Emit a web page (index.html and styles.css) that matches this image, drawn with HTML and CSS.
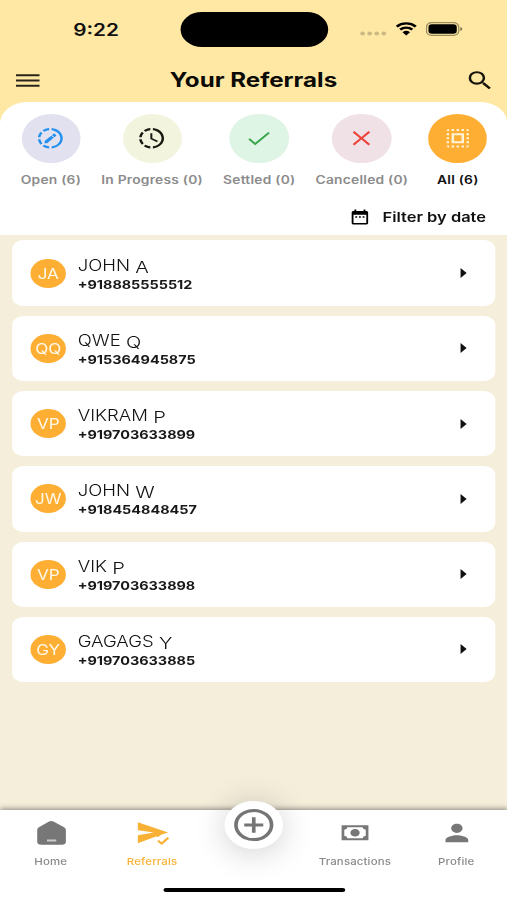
FILE: index.html
```html
<!DOCTYPE html>
<html lang="en">
<head>
<meta charset="utf-8">
<title>Your Referrals</title>
<link rel="stylesheet" href="styles.css">
</head>
<body>
<svg class="defs" width="0" height="0">
  <symbol id="ring" viewBox="0 0 24 24"><path d="M11 4.07V2.05c-2.01.2-3.84 1-5.32 2.21L7.1 5.69c1.11-.86 2.44-1.44 3.9-1.62zM5.69 7.1L4.26 5.68C3.05 7.16 2.25 8.99 2.05 11h2.02c.18-1.46.76-2.79 1.62-3.9zM4.07 13H2.05c.2 2.01 1 3.84 2.21 5.32l1.43-1.43c-.86-1.1-1.44-2.43-1.62-3.89zm1.61 6.74C7.16 20.95 9 21.75 11 21.95v-2.02c-1.46-.18-2.79-.76-3.9-1.62l-1.42 1.43zM22 12c0 5.16-3.92 9.42-8.95 9.95v-2.02C16.97 19.41 20 16.05 20 12s-3.03-7.41-6.95-7.93V2.05C18.08 2.58 22 6.84 22 12z"/></symbol>
  <symbol id="arrow" viewBox="0 0 24 24"><path d="M10 17l5-5-5-5v10z"/></symbol>
</svg>
<div class="phone">
  <header class="top">
    <div class="status">
      <span class="time">9:22</span>
      <span class="island"></span>
      <div class="signals">
        <svg class="dots" width="22" height="5" viewBox="0 0 22 5"><circle cx="2.2" cy="2.5" r="1.9"/><circle cx="8" cy="2.5" r="1.9"/><circle cx="13.8" cy="2.5" r="1.9"/><circle cx="19.6" cy="2.5" r="1.9"/></svg>
        <svg class="wifi" width="18" height="14" viewBox="0 0 18 14"><path d="M1.2 4.6a11.2 11.2 0 0 1 15.6 0M4 7.7a7.2 7.2 0 0 1 10 0" fill="none" stroke="#000" stroke-width="2.3"/><path d="M5.9 10.2a4.5 4.5 0 0 1 6.2 0L9 13.6z"/></svg>
        <svg class="battery" width="31" height="14" viewBox="0 0 31 14"><rect x=".6" y=".6" width="26.4" height="12.8" rx="4.2" fill="none" stroke="#000" stroke-opacity=".4" stroke-width="1.1"/><rect x="2.2" y="2.2" width="23.2" height="9.6" rx="2.8"/><path d="M28.3 5v4c1.2-.5 1.6-1.2 1.6-2s-.4-1.5-1.6-2z" opacity=".5"/></svg>
      </div>
    </div>
    <div class="appbar">
      <svg class="menu" width="25" height="25" viewBox="0 0 24 24"><path d="M3 18h18.500v-2H3v2zm0-5h18.500v-2H3v2zm0-7v2h18.500V6H3z"/></svg>
      <h1>Your Referrals</h1>
      <svg class="search" width="25" height="25" viewBox="0 0 24 24"><path d="M15.5 14h-.79l-.28-.27A6.471 6.471 0 0 0 16 9.5 6.5 6.5 0 1 0 9.5 16c1.61 0 3.09-.59 4.23-1.57l.27.28v.79l5 4.99L20.490 19l-4.990-5zm-6 0C7.010 14 5 11.990 5 9.500S7.010 5 9.500 5 14 7.010 14 9.500 11.990 14 9.500 14z"/></svg>
    </div>
  </header>
  <section class="filters">
    <div class="tabs">
      <div class="tab"><span class="disc open"><svg viewBox="0 0 24 24"><use href="#ring"/><path d="M7.400 14.800v2h2l5.300-5.200-2-2zM13.300 9l2 2 1.300-1.300c.3-.3.3-.7 0-1l-1-1c-.3-.3-.7-.3-1 0z"/></svg></span><span class="label">Open (6)</span></div>
      <div class="tab"><span class="disc progress"><svg viewBox="0 0 24 24"><use href="#ring"/><path d="M11 7.200h1.600v4.700l4.500 2.600-.8 1.400L11 12.800z"/></svg></span><span class="label">In Progress (0)</span></div>
      <div class="tab"><span class="disc settled"><svg viewBox="0 0 24 24"><path d="M9 16.400L4.700 12.100l-1.200 1.200L9 18.800 20.700 7.100 19.500 5.900z"/></svg></span><span class="label">Settled (0)</span></div>
      <div class="tab"><span class="disc cancelled"><svg viewBox="0 0 24 24"><path d="M19 6.300L17.700 5 12 10.700 6.300 5 5 6.300 10.700 12 5 17.700 6.300 19 12 13.300 17.700 19 19 17.700 13.300 12z"/></svg></span><span class="label">Cancelled (0)</span></div>
      <div class="tab active"><span class="disc all"><svg viewBox="0 0 24 24"><path d="M3 5h2V3c-1.100 0-2 .9-2 2zm0 8h2v-2H3v2zm4 8h2v-2H7v2zM3 9h2V7H3v2zm10-6h-2v2h2V3zm6 0v2h2c0-1.100-.9-2-2-2zM5 21v-2H3c0 1.100.9 2 2 2zm-2-4h2v-2H3v2zM9 3H7v2h2V3zm2 18h2v-2h-2v2zm8-8h2v-2h-2v2zm0 8c1.100 0 2-.9 2-2h-2v2zm0-12h2V7h-2v2zm0 8h2v-2h-2v2zm-4 4h2v-2h-2v2zm0-16h2V3h-2v2zM7 17h10V7H7v10zm2-8h6v6H9V9z"/></svg></span><span class="label">All (6)</span></div>
    </div>
    <div class="date">
      <svg width="18" height="18" viewBox="0 0 24 24"><path d="M9 11H7v2h2v-2zm4 0h-2v2h2v-2zm4 0h-2v2h2v-2zm2-7h-1V2h-2v2H8V2H6v2H5c-1.110 0-1.990.9-1.990 2L3 20c0 1.100.89 2 2 2h14c1.100 0 2-.9 2-2V6c0-1.100-.9-2-2-2zm0 16H5V9h14v11z"/></svg>
      <span>Filter by date</span>
    </div>
  </section>
  <main class="list">
    <article class="card"><span class="avatar">JA</span><div class="who"><p class="name">JOHN <b>A</b></p><p class="tel">+918885555512</p></div><svg class="go"><use href="#arrow"/></svg></article>
    <article class="card"><span class="avatar">QQ</span><div class="who"><p class="name">QWE <b>Q</b></p><p class="tel">+915364945875</p></div><svg class="go"><use href="#arrow"/></svg></article>
    <article class="card"><span class="avatar">VP</span><div class="who"><p class="name">VIKRAM <b>P</b></p><p class="tel">+919703633899</p></div><svg class="go"><use href="#arrow"/></svg></article>
    <article class="card"><span class="avatar">JW</span><div class="who"><p class="name">JOHN <b>W</b></p><p class="tel">+918454848457</p></div><svg class="go"><use href="#arrow"/></svg></article>
    <article class="card"><span class="avatar">VP</span><div class="who"><p class="name">VIK <b>P</b></p><p class="tel">+919703633898</p></div><svg class="go"><use href="#arrow"/></svg></article>
    <article class="card"><span class="avatar">GY</span><div class="who"><p class="name">GAGAGS <b>Y</b></p><p class="tel">+919703633885</p></div><svg class="go"><use href="#arrow"/></svg></article>
  </main>
  <nav class="nav">
    <div class="item"><svg width="26" height="28" viewBox="0 0 26 28"><path d="M11.200 2.500Q13 1.500 14.800 2.500L23.200 8Q25 9.200 25 11V22.500Q25 25.800 21.700 25.800H4.800Q1.500 25.800 1.500 22.500V11Q1.500 9.200 3.200 8z"/><path d="M9.500 20.600h7.600v1.900H9.500z" fill="#ccc"/></svg><span>Home</span></div>
    <div class="item on"><svg width="28" height="28" viewBox="0 0 28 28"><path d="M2 3.200L26.800 13.400 21 15.800 18.700 18 16.800 17.500 2 24.300V16.300L15 13.500 2 11.200z"/><path d="M18.500 21.600l3 3L27 18.800" fill="none" stroke="#f9b135" stroke-width="2"/></svg><span>Referrals</span></div>
    <div class="item"><span class="fab"><svg width="34" height="34" viewBox="0 0 34 34" fill="none" stroke="#757575" stroke-width="3"><circle cx="17" cy="17" r="14.600"/><path d="M17 9.200v15.600M9.200 17h15.600"/></svg></span></div>
    <div class="item"><svg width="24" height="28" viewBox="0 0 24 28"><path fill-rule="evenodd" d="M1 6.300h22v14.900H1zM5.800 8.200Q5.500 10.500 3.200 10.800V16.700Q5.500 17 5.800 19.300H18.200Q18.500 17 20.800 16.700V10.800Q18.500 10.500 18.200 8.200z"/><circle cx="12" cy="13.800" r="3.800"/></svg><span>Transactions</span></div>
    <div class="item"><svg width="29" height="28" viewBox="0 0 24 24"><path d="M12 12c2.210 0 4-1.790 4-4s-1.790-4-4-4-4 1.790-4 4 1.790 4 4 4zm0 2c-2.670 0-8 1.340-8 4v2h16v-2c0-2.660-5.330-4-8-4z"/></svg><span>Profile</span></div>
    <i class="home-bar"></i>
  </nav>
</div>
</body>
</html>
```
FILE: styles.css
```css
* { box-sizing: border-box; }
html, body { margin: 0; height: 900px; overflow: hidden; }
body { font-family: Inter, "Liberation Sans", sans-serif; background: #f5eedb; color: #111; }
.defs { position: absolute; }
svg { display: block; flex: none; }

.phone { width: 415.57px; height: 900px; transform: scaleX(1.22); transform-origin: 0 0; display: flex; flex-direction: column; }

.top { height: 122px; flex: none; background: #ffe8a3; }
.status { height: 58px; display: grid; grid-template-columns: 147.500px 121.500px 1fr; align-items: center; }
.time { font-size: 17px; font-weight: 600; padding-left: 60px; line-height: 20px; margin-top: 1px; }
.island { height: 35px; border-radius: 18px; background: #000; margin-top: 1px; }
.signals { display: flex; align-items: center; padding-left: 25.800px; }
.dots { fill: #cbb983; margin-top: 9px; }
.wifi { margin-left: 7px; }
.battery { margin-left: 7px; }
.appbar { height: 44px; display: flex; align-items: center; justify-content: space-between; padding: 0 10px; }
.appbar h1 { margin: 0; font-size: 19.800px; font-weight: 700; line-height: 24px; color: #0b0a06; }
.menu { fill: #28241a; }
.search { fill: #16140d; }

.filters { height: 133px; margin-top: -20px; flex: none; background: #fff; border-radius: 22px 22px 0 0; padding-top: 12px; }
.tabs { display: flex; gap: 16.500px; padding-left: 17px; height: 88px; }
.tab { display: flex; flex-direction: column; align-items: center; color: #8b8b8b; }
.disc { width: 48.300px; height: 48.500px; border-radius: 50%; display: grid; place-items: center; }
.disc svg { width: 24.500px; height: 24.500px; }
.open { background: #e1e1f0; fill: #2491ee; }
.progress { background: #f3f4de; fill: #191912; }
.settled { background: #def4e4; fill: #36a449; }
.cancelled { background: #f0e1e6; fill: #ec4238; }
.all { background: #fdae33; fill: #fff3d8; }
.label { font-size: 11.300px; font-weight: 600; line-height: 16px; margin-top: 9px; letter-spacing: .2px; white-space: nowrap; }
.active .label { color: #111; }
.date { display: flex; align-items: center; justify-content: flex-end; gap: 9.500px; padding-right: 17.200px; height: 28px; margin-top: 1px; font-size: 13.500px; font-weight: 600; }
.date svg { margin-top: -1px; }

.list { flex: 1; background: #f5eedb; display: flex; flex-direction: column; gap: 9.900px; padding: 5.400px 10px 0 10.300px; }
.card { height: 65.400px; flex: none; background: #fff; border-radius: 9px; display: flex; align-items: center; padding: 0 14px 0 14.500px; }
.avatar { width: 29.500px; height: 29px; border-radius: 50%; background: #fdae33; color: #fff8e8; font-size: 14px; display: grid; place-items: center; }
.who { flex: 1; margin-left: 9.400px; padding-top: 2px; }
.who p { margin: 0; white-space: nowrap; }
.name { font-size: 15.200px; font-weight: 300; line-height: 21px; color: #111; }
.name b { font-size: 16.500px; font-weight: 300; display: inline-block; line-height: 19px; transform: translateY(1.500px); }
.tel { font-size: 11.800px; font-weight: 700; line-height: 18px; color: #181818; }
.go { width: 24px; height: 24px; fill: #111; transform: translateX(-.500px); }

.nav { height: 90.500px; flex: none; position: relative; background: #fff; display: grid; grid-template-columns: repeat(5, 1fr); box-shadow: 0 -1px 5px rgba(0,0,0,.45); }
.item { display: flex; flex-direction: column; align-items: center; padding-top: 9px; fill: #777; color: #8a8a8a; font-size: 9.400px; font-weight: 500; letter-spacing: .12px; }
.item > span:not(.fab) { line-height: 14px; margin-top: 8px; }
.on { fill: #f9b135; color: #f9b135; }
.fab { width: 48.500px; height: 48.500px; margin-top: -18px; border-radius: 50%; background: #fff; display: grid; place-items: center; box-shadow: 0 3px 30px rgba(0,0,0,.2); }
.home-bar { position: absolute; left: 134px; bottom: 8px; width: 149px; height: 4.500px; border-radius: 3px; background: #000; }
```
